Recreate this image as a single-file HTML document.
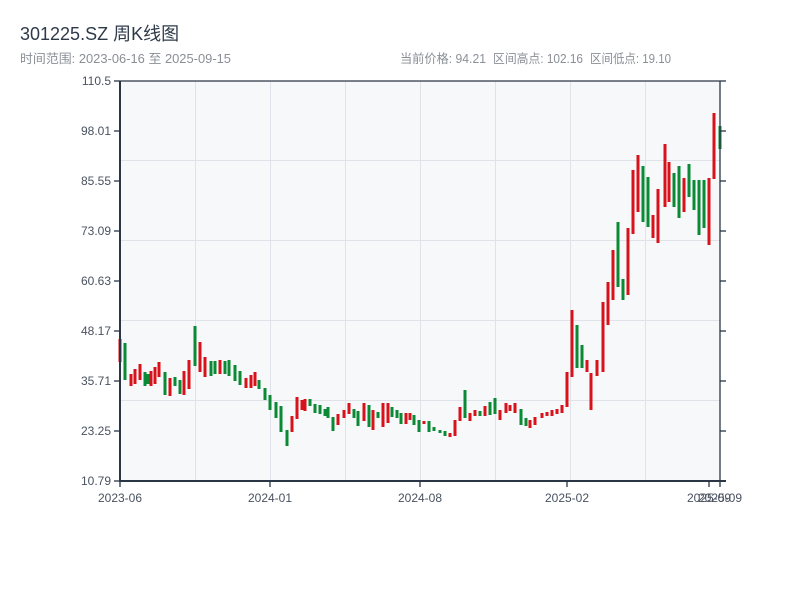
<!DOCTYPE html>
<html><head><meta charset="utf-8"><style>
body{margin:0;width:800px;height:600px;background:#fff;font-family:"Liberation Sans","Noto Sans CJK SC",sans-serif;overflow:hidden}
</style></head><body>
<svg id="s" width="800" height="600" xmlns="http://www.w3.org/2000/svg" style="position:absolute;left:0;top:0">
<text x="20" y="40" font-size="18" fill="#2e3a4a" font-family="Liberation Sans,Noto Sans CJK SC,sans-serif">301225.SZ 周K线图</text>
<g font-size="12.5" fill="#8a8f96" font-family="Liberation Sans,Noto Sans CJK SC,sans-serif">
<text x="20" y="63" textLength="211" lengthAdjust="spacingAndGlyphs">时间范围: 2023-06-16 至 2025-09-15</text>
<text x="400" y="63" textLength="86" lengthAdjust="spacingAndGlyphs">当前价格: 94.21</text>
<text x="493" y="63" textLength="90" lengthAdjust="spacingAndGlyphs">区间高点: 102.16</text>
<text x="590" y="63" textLength="81" lengthAdjust="spacingAndGlyphs">区间低点: 19.10</text>
</g>
<rect x="120" y="81" width="600" height="400" fill="#f6f8fa"/>
<g id="grid" stroke="#dfe2e8" stroke-width="1"></g>
<g id="c"></g>
<g stroke="#2a3646" fill="none">
<line x1="120" y1="81" x2="720" y2="81" stroke-width="1.3"/>
<line x1="720" y1="81" x2="720" y2="481" stroke-width="1.3"/>
<line x1="120" y1="81" x2="120" y2="482" stroke-width="2"/>
<line x1="119" y1="481" x2="726" y2="481" stroke-width="2"/>
</g>
<g id="ax" font-size="12" fill="#4a5260" font-family="Liberation Sans,sans-serif"></g>
</svg>
<script>
var ns="http://www.w3.org/2000/svg";
function el(p,t,a,txt){var e=document.createElementNS(ns,t);for(var k in a)e.setAttribute(k,a[k]);if(txt)e.textContent=txt;document.getElementById(p).appendChild(e);}
for(var x=195;x<720;x+=75)el("grid","line",{x1:x+.5,y1:81,x2:x+.5,y2:481});
for(var y=160;y<481;y+=80)el("grid","line",{x1:120,y1:y+.5,x2:720,y2:y+.5});
var labs=["110.5","98.01","85.55","73.09","60.63","48.17","35.71","23.25","10.79"];
for(var i=0;i<9;i++){var yy=81+i*50;el("ax","text",{x:111,y:yy+4,"text-anchor":"end"},labs[i]);
el("ax","line",{x1:114,y1:yy,x2:120,y2:yy,stroke:"#2a3646","stroke-width":1.3});
el("ax","line",{x1:720,y1:yy,x2:726,y2:yy,stroke:"#2a3646","stroke-width":1.3});}
var xl=[[120,"2023-06"],[270,"2024-01"],[420,"2024-08"],[567,"2025-02"],[709,"2025-09"],[720,"2025-09"]];
xl.forEach(function(a){el("ax","line",{x1:a[0],y1:481,x2:a[0],y2:487,stroke:"#2a3646","stroke-width":1.3});
el("ax","text",{x:a[0],y:502,"text-anchor":"middle"},a[1]);});
var d=[[120,339,362,1],[125,343,380,0],[131,374,386,1],[135,369,384,1],[140,364,380,1],[145,372,386,0],[148,374,384,0],[151,371,386,1],[155,367,384,1],[159,362,377,1],[165,372,395,0],[170,378,396,1],[175,377,386,0],[180,380,394,0],[184,371,395,1],[189,360,389,1],[195,326,366,0],[200,342,372,1],[205,357,377,1],[211,361,376,0],[215,361,374,0],[220,360,374,1],[225,361,374,0],[229,360,376,0],[235,365,381,0],[240,371,385,0],[246,378,388,1],[251,375,388,1],[255,372,386,1],[259,380,389,0],[265,388,400,0],[270,395,410,0],[276,402,418,0],[281,406,432,0],[287,430,446,0],[292,416,432,1],[297,397,419,1],[302,400,410,1],[305,399,411,1],[310,399,406,0],[315,404,413,0],[320,405,414,0],[325,409,416,0],[328,407,418,0],[333,417,431,0],[338,414,425,1],[344,410,418,1],[349,403,414,1],[354,409,418,0],[358,411,426,0],[364,403,421,1],[369,405,427,0],[373,410,430,1],[378,412,418,0],[383,403,427,1],[388,403,423,1],[392,407,417,0],[397,410,418,0],[401,413,424,0],[406,413,424,1],[410,413,420,1],[414,415,425,0],[419,420,432,0],[424,421,424,1],[429,421,432,0],[434,427,431,0],[440,430,433,0],[445,431,436,0],[450,433,437,1],[455,420,436,1],[460,407,421,1],[465,390,418,0],[470,413,421,1],[475,410,416,1],[480,411,416,0],[485,406,416,1],[490,402,415,0],[495,398,414,0],[500,410,420,1],[506,403,413,1],[510,405,411,1],[515,403,413,1],[521,409,425,0],[526,418,426,0],[530,420,428,1],[535,417,425,1],[542,413,418,1],[547,412,416,1],[552,410,416,1],[557,409,414,1],[562,405,413,1],[567,372,407,1],[572,310,377,1],[577,325,368,0],[582,345,368,0],[587,360,372,1],[591,373,410,1],[597,360,376,1],[603,302,372,1],[608,282,325,1],[613,250,300,1],[618,222,287,0],[623,279,300,0],[628,228,295,1],[633,170,234,1],[638,155,212,1],[643,166,222,0],[648,177,227,0],[653,215,238,1],[658,189,243,1],[665,144,207,1],[669,162,202,1],[674,173,207,0],[679,166,218,0],[684,178,212,1],[689,164,197,0],[694,180,210,0],[699,180,235,0],[704,180,228,0],[709,178,245,1],[714,113,179,1],[720,126,149,0]];
d.forEach(function(a){el("c","rect",{x:a[0]-1.5,y:a[1],width:3,height:a[2]-a[1],fill:a[3]?"#d8121a":"#0a8a34"});});
</script>
</body></html>
